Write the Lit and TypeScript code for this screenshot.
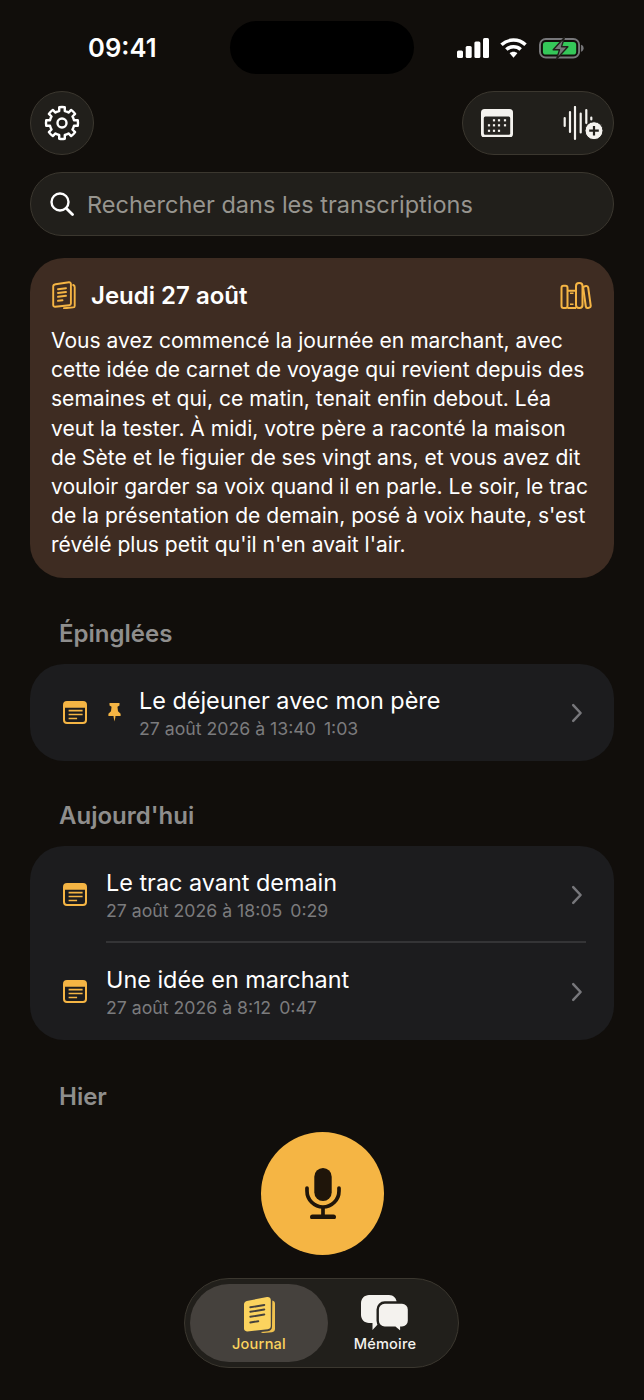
import { LitElement, html, css, svg } from "lit";
import { customElement } from "lit/decorators.js";

const ACCENT = "#f5b544";

const noteIcon = html`<svg class="note" viewBox="0 0 24 23" width="24" height="23" fill="none">
  <rect x="1" y="1" width="22" height="21" rx="3" stroke="${ACCENT}" stroke-width="2"/>
  <path d="M1 4a3 3 0 0 1 3-3h16a3 3 0 0 1 3 3v2.800H1z" fill="${ACCENT}"/>
  <path d="M5.600 9.700h14M5.600 13.500h14M5.600 17.500h8.500" stroke="${ACCENT}" stroke-width="1.700"/>
</svg>`;

const chevron = html`<svg class="chev" viewBox="0 0 12 20" width="12" height="20" fill="none">
  <path d="M2.200 2.200 9.600 10l-7.400 7.800" stroke="#77777b" stroke-width="2.500" stroke-linecap="round" stroke-linejoin="round"/>
</svg>`;

/* Eight-toothed cog outline, computed in polar coordinates. */
function gearPath(cx: number, cy: number, rIn: number, rOut: number): string {
  const pt = (r: number, deg: number) => {
    const a = (deg * Math.PI) / 180;
    return `${(cx + r * Math.cos(a)).toFixed(2)} ${(cy + r * Math.sin(a)).toFixed(2)}`;
  };
  let d = "";
  for (let i = 0; i < 8; i++) {
    const a = i * 45 - 90;
    d += `${i === 0 ? "M" : `A${rIn} ${rIn} 0 0 1 `}${pt(rIn, a - 13)}`;
    d += `L${pt(rOut, a - 10)}A${rOut} ${rOut} 0 0 1 ${pt(rOut, a + 10)}L${pt(rIn, a + 13)}`;
  }
  return `${d}A${rIn} ${rIn} 0 0 1 ${pt(rIn, -103)}Z`;
}

const calDots = [
  [13, 11.300], [18, 11.300], [24, 11.300],
  [8, 16.300], [13, 16.300], [18, 16.300], [24, 16.300],
  [8, 21.800], [13, 21.800], [18, 21.800],
];

interface Row { title: string; date: string; dur: string; pinned?: boolean }

@customElement("app-root")
export class AppRoot extends LitElement {
  static styles = css`
    :host {
      display: block;
      width: 644px;
      height: 1400px;
      overflow: hidden;
      position: relative;
      background: #110e0b;
      font-family: Inter, "Liberation Sans", sans-serif;
      color: #fff;
    }
    .status {
      height: 91px;
      display: flex;
      align-items: flex-start;
      justify-content: space-between;
      box-sizing: border-box;
      padding: 31px 60px 0 88px;
    }
    .time { font-size: 25.600px; line-height: 34px; font-weight: 600; }
    .island {
      position: absolute;
      left: 230px;
      top: 21px;
      width: 184px;
      height: 53px;
      border-radius: 27px;
      background: #000;
    }
    .sys { display: flex; align-items: center; margin-top: 6px; }
    .signal { margin-right: 11px; }
    .wifi { margin-right: 12px; }
    .page { padding: 0 30px; display: flex; flex-direction: column; }
    .head { display: flex; justify-content: space-between; height: 64px; }
    .glass {
      box-sizing: border-box;
      background: #211f1b;
      border: 1.500px solid #3b372f;
    }
    .round {
      width: 64px; height: 64px; border-radius: 50%;
      display: flex; align-items: center; justify-content: center;
    }
    .pill {
      width: 152px; height: 64px; border-radius: 32px;
      display: flex; align-items: center; justify-content: space-between;
      padding: 0 10.500px 0 18px;
    }
    .search {
      margin-top: 17px;
      height: 64px;
      border-radius: 32px;
      display: flex; align-items: center; gap: 13px;
      padding: 0 18px 0 19px;
      color: #97958f;
      font-size: 23.500px;
    }
    .summary {
      margin-top: 22px;
      height: 320px;
      box-sizing: border-box;
      background: #3e2c22;
      border-radius: 34px;
      padding: 20px 20px 0 21px;
    }
    .sum-head { display: flex; align-items: center; height: 34px; }
    .book { margin-left: 1px; }
    .shelf { margin-right: 2px; }
    .sum-head h2 {
      margin: 0 0 0 15px;
      font-size: 24px;
      font-weight: 600;
      flex: 1;
    }
    .sum-text {
      margin: 14px 0 0;
      font-size: 21.050px;
      line-height: 29.200px;
      white-space: pre-line;
    }
    h3 {
      margin: 0;
      font-size: 24px;
      font-weight: 600;
      color: #8f8e8d;
      padding-left: 29px;
      line-height: 30px;
    }
    .sec1 { margin-top: 41px; }
    .sec2 { margin-top: 40px; }
    .sec3 { margin-top: 42px; }
    .list {
      margin-top: 15px;
      background: #1c1c1e;
      border-radius: 34px;
      display: flex;
      flex-direction: column;
    }
    .row {
      height: 97px;
      box-sizing: border-box;
      display: flex;
      align-items: center;
      padding-left: 33px;
      padding-right: 31px;
    }
    .body {
      flex: 1;
      margin-left: 19px;
      align-self: stretch;
      display: flex;
      align-items: center;
    }
    .pin { margin-left: 21px; margin-right: -1px; }
    .txt { flex: 1; }
    .title { font-size: 23.400px; line-height: 32px; }
    .meta { font-size: 17.700px; line-height: 24px; color: #7b7b7d; }
    .meta span { margin-left: 8px; }
    .divider { height: 2px; background: #343436; margin: -2px 28px 0 76px; }
    .mic {
      position: absolute;
      left: 261px;
      top: 1132px;
      width: 123px;
      height: 123px;
      border-radius: 50%;
      background: #f5b544;
      display: flex; align-items: center; justify-content: center;
    }
    .tabs {
      position: absolute;
      left: 184px;
      top: 1278px;
      width: 275px;
      height: 90px;
      border-radius: 45px;
      padding: 5px;
      display: flex;
    }
    .tab {
      height: 78px;
      border-radius: 39px;
      display: flex;
      flex-direction: column;
      align-items: center;
      justify-content: flex-end;
      font-size: 14.600px;
      font-weight: 500;
      padding-bottom: 9px;
      box-sizing: border-box;
      gap: 2px;
      letter-spacing: 0.200px;
    }
    .tab.on { width: 138px; background: #45413d; color: #fbd35e; }
    .tab.off { width: 114px; color: #f4f2ee; }
  `;

  private renderRow(r: Row) {
    return html`<div class="row">
      ${noteIcon}
      ${r.pinned
        ? html`<svg class="pin" viewBox="0 0 14 20" width="13" height="18.500" fill="${ACCENT}">
            <path d="M1.600 0h10.800v2.600L10.200 4l.6 5 2.800 2.600V14H8v1l-1 5-1-5v-1H.4v-2.400L3.200 9l.6-5L1.600 2.600z"/>
          </svg>`
        : ""}
      <div class="body">
        <div class="txt">
          <div class="title">${r.title}</div>
          <div class="meta">${r.date}<span>${r.dur}</span></div>
        </div>
        ${chevron}
      </div>
    </div>`;
  }

  render() {
    return html`
      <div class="status">
        <div class="time">09:41</div>
        <div class="sys">
          <svg class="signal" viewBox="0 0 32 20" width="32" height="20" fill="#fff">
            <rect x="0" y="12.500" width="6" height="7.500" rx="1.500"/>
            <rect x="8.700" y="8" width="6" height="12" rx="1.500"/>
            <rect x="17.400" y="3.500" width="6" height="16.500" rx="1.500"/>
            <rect x="26" y="0" width="6" height="20" rx="1.500"/>
          </svg>
          <svg class="wifi" viewBox="0 0 28 20" width="27" height="20" fill="#fff">
            <path d="M14 0c5.300 0 10.100 2 13.700 5.300l-2.500 2.600A16.300 16.300 0 0 0 14 3.500 16.300 16.300 0 0 0 2.800 7.900L.3 5.300A20 20 0 0 1 14 0z"/>
            <path d="M14 7c3.400 0 6.400 1.300 8.700 3.300l-2.500 2.600A9.100 9.100 0 0 0 14 10.500a9.100 9.100 0 0 0-6.200 2.400l-2.500-2.600A12.800 12.800 0 0 1 14 7z"/>
            <path d="M14 14c1.600 0 3 .6 4 1.500L14 20l-4-4.500c1-.9 2.400-1.500 4-1.500z"/>
          </svg>
          <svg viewBox="0 0 46 23" width="45" height="22.500" fill="none">
            <rect x="1" y="2" width="40" height="19" rx="6" stroke="#77777a" stroke-width="2"/>
            <rect x="4" y="5" width="34" height="13" rx="3" fill="#35c759"/>
            <path d="M43 8c1.800.5 2.600 2 2.600 3.500S44.800 14.500 43 15z" fill="#77777a"/>
            <path d="M26 .5 14.500 13h6.500L18 22.500 29.500 10H23z" fill="#77777a" stroke="#211f1b" stroke-width="1.400" stroke-linejoin="round"/>
          </svg>
        </div>
      </div>
      <div class="island"></div>
      <div class="page">
        <div class="head">
          <div class="glass round">
            <svg viewBox="0 0 36 36" width="36" height="36" fill="none" stroke="#fff" stroke-width="2.400" stroke-linejoin="round">
              <path d="${gearPath(18, 18, 12.300, 16)}"/>
              <circle cx="18" cy="18" r="4.500"/>
            </svg>
          </div>
          <div class="glass pill">
            <svg viewBox="0 0 32 28.500" width="32" height="28.500">
              <rect width="32" height="28.500" rx="3.500" fill="#f4f2ee"/>
              <rect x="2.800" y="7.500" width="26.400" height="18.200" rx="1.500" fill="#262420"/>
              <g fill="#f4f2ee">
                ${calDots.map(([x, y]) => svg`<rect x="${x - 1.100}" y="${y - 1.100}" width="2.200" height="2.200"/>`)}
              </g>
            </svg>
            <svg viewBox="0 0 40 35" width="40" height="35">
              <g stroke="#f4f2ee" stroke-width="2.200" stroke-linecap="round">
                <path d="M1.700 12v8M7 6v20M12 1v32M17.700 7.500v19M23.300 4v13M28.300 11.500v2"/>
              </g>
              <circle cx="31" cy="24.700" r="9" fill="#f4f2ee" stroke="#211f1b" stroke-width="1"/>
              <path d="M31 19.900v9.600M26.200 24.700h9.600" stroke="#211f1b" stroke-width="2.200"/>
            </svg>
          </div>
        </div>
        <div class="glass search">
          <svg viewBox="0 0 24 24" width="24" height="24" fill="none" stroke="#fff" stroke-width="2.400" stroke-linecap="round">
            <circle cx="10" cy="10" r="8.500"/>
            <path d="m16.200 16.200 6.300 6.300" stroke-width="2.800"/>
          </svg>
          <span>Rechercher dans les transcriptions</span>
        </div>

        <div class="summary">
          <div class="sum-head">
            <svg class="book" viewBox="0 0 24 28" width="24" height="28" fill="none" stroke="${ACCENT}" stroke-width="1.900" stroke-linecap="round" stroke-linejoin="round">
              <path d="M3.500 3.200 17 1.300c1.100-.1 1.900.6 1.900 1.700v19.500c0 .9-.6 1.600-1.500 1.700L3.200 25.800c-1.100.1-2-.7-2-1.800V5.600c0-1.200 1-2.200 2.300-2.400z"/>
              <path d="M21.200 4c.9.300 1.500 1 1.500 1.900v19c0 .9-.7 1.500-1.500 1.500l-9.200.9"/>
              <path d="M6 8.200l8-1M6 12l8-1M6 15.800l8-1M6 19.800l4.500-.5"/>
            </svg>
            <h2>Jeudi 27 août</h2>
            <svg class="shelf" viewBox="0 0 32 27" width="32" height="27" fill="none" stroke="${ACCENT}" stroke-width="2" stroke-linejoin="round">
              <rect x="1.500" y="3.700" width="6" height="22.300" rx="2"/>
              <path d="M7.500 8.700H16M7.500 26H16"/>
              <path d="M10 11.300h3.500M10 22.300h3.500" stroke-width="1.600"/>
              <rect x="16" y="1" width="6.500" height="25" rx="3"/>
              <rect x="24.500" y="4" width="5" height="22" rx="2" transform="rotate(-8 27 15)"/>
            </svg>
          </div>
          <p class="sum-text">Vous avez commencé la journée en marchant, avec
cette idée de carnet de voyage qui revient depuis des
semaines et qui, ce matin, tenait enfin debout. Léa
veut la tester. À midi, votre père a raconté la maison
de Sète et le figuier de ses vingt ans, et vous avez dit
vouloir garder sa voix quand il en parle. Le soir, le trac
de la présentation de demain, posé à voix haute, s'est
révélé plus petit qu'il n'en avait l'air.</p>
        </div>

        <h3 class="sec1">Épinglées</h3>
        <div class="list">
          ${this.renderRow({ title: "Le déjeuner avec mon père", date: "27 août 2026 à 13:40", dur: "1:03", pinned: true })}
        </div>

        <h3 class="sec2">Aujourd'hui</h3>
        <div class="list">
          ${this.renderRow({ title: "Le trac avant demain", date: "27 août 2026 à 18:05", dur: "0:29" })}
          <div class="divider"></div>
          ${this.renderRow({ title: "Une idée en marchant", date: "27 août 2026 à 8:12", dur: "0:47" })}
        </div>

        <h3 class="sec3">Hier</h3>
      </div>

      <div class="mic">
        <svg viewBox="0 0 36 51.500" width="36" height="51.500" fill="none">
          <rect x="9.300" y="0" width="17.400" height="33" rx="8.700" fill="#1f150a"/>
          <path d="M2 20v3a16 16 0 0 0 32 0v-3" stroke="#1f150a" stroke-width="3.700" stroke-linecap="round"/>
          <path d="M18 39v9" stroke="#1f150a" stroke-width="3.700"/>
          <path d="M7.500 48.900h21" stroke="#1f150a" stroke-width="5" stroke-linecap="round"/>
        </svg>
      </div>
      <div class="glass tabs">
        <div class="tab on">
          <svg viewBox="0 0 31 37" width="31" height="37">
            <path d="M28.300 4.500c1.700.3 2.700 1.500 2.700 3V33c0 1.800-1.300 3-3 3.200l-8.500.8c-1 .1-2-.3-2.500-1l7-.7c2.500-.3 4-2 4-4.500z" fill="#efc14f"/>
            <path d="M2.800 5 23 1c2-.4 3.800 1 3.800 3v26c0 1.800-1.200 3-3 3.200L3.300 35.400C1.500 35.600 0 34.400 0 32.600V8.300C0 6.700 1.200 5.300 2.800 5z" fill="#fbd35e"/>
            <path d="M6.300 11.300l14-2.300M6.300 15.800l14-2.300M6.300 20.800l14-2.300M6.300 26.500l8-1.300" stroke="#45413d" stroke-width="1.900" stroke-linecap="round"/>
          </svg>
          <span>Journal</span>
        </div>
        <div class="tab off">
          <svg viewBox="0 0 48 38" width="48" height="38" fill="#f4f2ee">
            <path d="M8 0h20c4.400 0 7.700 3.300 7.700 7.700v12.600c0 4.400-3.300 7.700-7.700 7.700h-10l-6.500 7V28H8c-4.400 0-8-3.600-8-8V8c0-4.400 3.600-8 8-8z"/>
            <path d="M23.700 7.500H41c3.900 0 7 3.100 7 7v11.200c0 3.900-3.100 7-7 7h-.7V38l-6.300-5.300H23.700c-3.900 0-7-3.100-7-7V14.500c0-3.900 3.100-7 7-7z" stroke="#211f1b" stroke-width="2.400"/>
          </svg>
          <span>Mémoire</span>
        </div>
      </div>
    `;
  }
}
